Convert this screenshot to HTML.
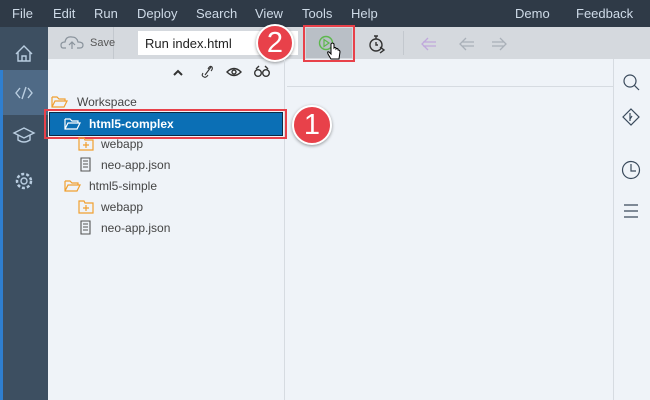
<!DOCTYPE html>
<html><head><style>
*{margin:0;padding:0;box-sizing:border-box}
body{width:650px;height:400px;overflow:hidden;background:#eff3f8;font-family:"Liberation Sans",sans-serif;position:relative}
.abs{position:absolute}
.menu{left:0;top:0;width:650px;height:27px;background:#2f3a47;color:#cfdbe8;font-size:13px}
.menu span{position:absolute;top:6px}
.side{left:0;top:27px;width:48px;height:373px;background:#3d4f61}
.tb{left:48px;top:27px;width:602px;height:32px;background:#d5d9de}
.t{font-size:12px;color:#333}
.badge{border-radius:50%;background:#e8414a;color:#fff;font-size:29px;text-align:center;border:2px solid #fff;box-shadow:0 1px 3px rgba(0,0,0,.4)}
</style></head><body>
<div class="abs menu">
<span style="left:12px">File</span><span style="left:53px">Edit</span><span style="left:94px">Run</span><span style="left:137px">Deploy</span><span style="left:196px">Search</span><span style="left:255px">View</span><span style="left:302px">Tools</span><span style="left:351px">Help</span><span style="left:515px">Demo</span><span style="left:576px">Feedback</span>
</div>
<div class="abs side"></div>
<div class="abs" style="left:0;top:70px;width:48px;height:45px;background:#4f6a86"></div>
<div class="abs" style="left:0;top:70px;width:3px;height:330px;background:#2f7fd0"></div>
<svg class="abs" style="left:0;top:27px" width="48" height="200" fill="none" stroke="#b9cde0" stroke-width="1.4">
<path d="M16 27 L24 19 L32 27 M18 25 V34 H30 V25 M22 34 V29 H26 V34"/>
<path d="M20 61 L16 66 L20 71 M28 61 L32 66 L28 71 M26 60 L22 72"/>
<path d="M14 106 L24 101 L34 106 L24 111 Z M18 108 V113 Q24 117 30 113 V108"/>
<circle cx="24" cy="154" r="3"/><circle cx="24" cy="154" r="7" stroke-dasharray="3 2" stroke-width="2.5"/>
</svg>
<div class="abs tb"></div>
<div class="abs" style="left:113px;top:27px;width:1px;height:32px;background:#c3c8ce"></div>
<div class="abs" style="left:403px;top:31px;width:1px;height:24px;background:#c3c8ce"></div>
<svg class="abs" style="left:60px;top:34px" width="26" height="18" fill="none" stroke="#8a939c" stroke-width="1.2"><path d="M6 14 H3 Q1 14 1 11 Q1 8 5 8 Q6 2 12 3 Q17 3 18 8 Q23 8 23 11 Q23 14 20 14 H17 M12 15 V8 M9 11 L12 8 L15 11"/></svg>
<div class="abs" style="left:90px;top:37px;font-size:11px;color:#555">Save</div>
<div class="abs" style="left:138px;top:31px;width:160px;height:24px;background:#fff"></div>
<div class="abs" style="left:145px;top:36px;font-size:13px;color:#222">Run index.html</div>
<div class="abs" style="left:306px;top:28px;width:46px;height:30px;background:#b9bfc6"></div>
<div class="abs" style="left:303px;top:25px;width:52px;height:37px;border:2px solid #e8414a"></div>
<svg class="abs" style="left:310px;top:28px" width="40" height="40" fill="none"><circle cx="16" cy="15" r="6.5" stroke="#5cb84c" stroke-width="1.4"/><path d="M14 11.5 V18.5 L19 15 Z" stroke="#5cb84c" stroke-width="1.2"/><path d="M21 16 V26 L19 24 Q17 23 18 26 L21 31 H29 L30 24 Q30 22 28 22 V21 Q27 20 26 21 V20 Q25 19 24 20 V16 Q22 14 21 16Z" fill="#fff" stroke="#000" stroke-width="1"/></svg>
<svg class="abs" style="left:365px;top:32px" width="24" height="24" fill="none" stroke="#333" stroke-width="1.4"><circle cx="11" cy="13" r="6"/><path d="M9 4 H13 M11 4 V7 M11 10 V13 H13 M15 15 L19 18 L15 21"/></svg>
<svg class="abs" style="left:418px;top:35px" width="100" height="18" fill="none" stroke-width="1.3"><path d="M10 3 L4 9 L10 15 M5 7 H18 M5 11 H18" stroke="#c0a8dc"/><path d="M48 3 L42 9 L48 15 M44 7 H56 M44 11 H56" stroke="#a9b0b8"/><path d="M82 3 L88 9 L82 15 M74 7 H86 M74 11 H86" stroke="#a9b0b8"/></svg>
<div class="abs badge" style="left:256px;top:24px;width:38px;height:38px;line-height:34px">2</div>
<div class="abs" style="left:284px;top:59px;width:1px;height:341px;background:#d6dbe1"></div>
<div class="abs" style="left:613px;top:59px;width:1px;height:341px;background:#d6dbe1"></div>
<div class="abs" style="left:287px;top:86px;width:326px;height:1px;background:#d6dbe1"></div>
<svg class="abs" style="left:168px;top:62px" width="110" height="20" fill="none" stroke="#333" stroke-width="1.4"><path d="M6 13 L10 9 L14 13" stroke-width="2"/><path d="M37 13 L43 5 M35 11 Q33 14 36 15 Q38 16 40 13 M40 7 Q42 3 44 5 Q45 7 43 9" stroke-width="1.1"/><path d="M59 10 Q66 3 73 10 Q66 17 59 10Z"/><circle cx="66" cy="10" r="2"/><circle cx="90" cy="11" r="3.3"/><circle cx="98" cy="11" r="3.3"/><path d="M88 7 L91 4 M100 7 L97 4"/></svg>
<svg class="abs" style="left:50px;top:94px" width="20" height="16" fill="none" stroke="#f0a030" stroke-width="1.2"><path d="M2 3 H7 L9 5 H15 V7 M2 3 V13 H14 L17 7 H5 L2 13"/></svg>
<div class="abs t" style="left:77px;top:95px;color:#444">Workspace</div>
<div class="abs" style="left:49px;top:112px;width:234px;height:24px;background:#0b6fb5;border:1px solid #0a2a45"></div>
<div class="abs" style="left:44px;top:109px;width:243px;height:30px;border:2px solid #e8414a"></div>
<svg class="abs" style="left:63px;top:116px" width="20" height="16" fill="none" stroke="#fff" stroke-width="1.2"><path d="M2 3 H7 L9 5 H15 V7 M2 3 V13 H14 L17 7 H5 L2 13"/></svg>
<div class="abs" style="left:89px;top:117px;font-size:12px;font-weight:bold;color:#fff">html5-complex</div>
<div class="abs badge" style="left:292px;top:105px;width:40px;height:40px;line-height:36px">1</div>
<svg class="abs" style="left:77px;top:136px" width="18" height="16" fill="none" stroke="#f0a030" stroke-width="1.2"><path d="M2 2 H7 L8 4 H16 V14 H2 Z M9 6 V12 M6 9 H12"/></svg>
<div class="abs t" style="left:101px;top:137px;color:#444">webapp</div>
<svg class="abs" style="left:79px;top:157px" width="14" height="16" fill="none" stroke="#555" stroke-width="1.1"><path d="M2 1 H11 V14 H2 Z M4 4 H9 M4 7 H9 M4 10 H9"/></svg>
<div class="abs t" style="left:101px;top:158px;color:#444">neo-app.json</div>
<svg class="abs" style="left:63px;top:178px" width="20" height="16" fill="none" stroke="#f0a030" stroke-width="1.2"><path d="M2 3 H7 L9 5 H15 V7 M2 3 V13 H14 L17 7 H5 L2 13"/></svg>
<div class="abs t" style="left:89px;top:179px;color:#444">html5-simple</div>
<svg class="abs" style="left:77px;top:199px" width="18" height="16" fill="none" stroke="#f0a030" stroke-width="1.2"><path d="M2 2 H7 L8 4 H16 V14 H2 Z M9 6 V12 M6 9 H12"/></svg>
<div class="abs t" style="left:101px;top:200px;color:#444">webapp</div>
<svg class="abs" style="left:79px;top:220px" width="14" height="16" fill="none" stroke="#555" stroke-width="1.1"><path d="M2 1 H11 V14 H2 Z M4 4 H9 M4 7 H9 M4 10 H9"/></svg>
<div class="abs t" style="left:101px;top:221px;color:#444">neo-app.json</div>
<svg class="abs" style="left:618px;top:70px" width="30" height="160" fill="none" stroke="#3a4a5c" stroke-width="1.2"><circle cx="12" cy="11" r="6"/><path d="M16 15 L21 20"/><path d="M13 39 L21 47 L13 55 L5 47 Z M12 43 V51 M14 46 L12 49"/><circle cx="13" cy="100" r="8.5"/><path d="M13 94 V101 H18"/><path d="M6 135 H20 M6 141 H20 M6 147 H20"/></svg>
</body></html>
